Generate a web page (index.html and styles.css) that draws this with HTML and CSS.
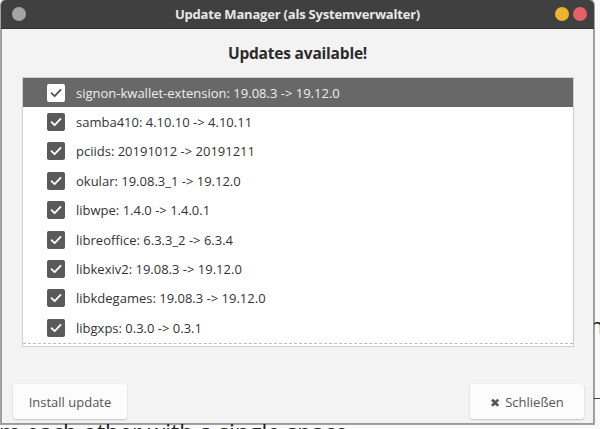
FILE: index.html
```html
<!DOCTYPE html>
<html>
<head>
<meta charset="utf-8">
<link rel="stylesheet" href="styles.css">
</head>
<body>
<div class="desktop">
  <div class="backdrop-right"><span class="bg-n">n</span></div>
  <div class="backdrop-bottom">m each other with a single space</div>
  <div class="window">
    <div class="titlebar">
      <span class="dot dot-gray"></span>
      <span class="title">Update Manager (als Systemverwalter)</span>
      <span class="dots-right">
        <span class="dot dot-yellow"></span>
        <span class="dot dot-red"></span>
      </span>
    </div>
    <div class="content">
      <h1 class="heading">Updates available!</h1>
      <div class="list">
        <div class="row selected"><span class="check"><svg viewBox="0 0 18 18"><path d="M4.5 9.2 L7.6 12.2 L13.6 5.8" /></svg></span><span class="label">signon-kwallet-extension: 19.08.3 -&gt; 19.12.0</span></div>
        <div class="row"><span class="check"><svg viewBox="0 0 18 18"><path d="M4.5 9.2 L7.6 12.2 L13.6 5.8" /></svg></span><span class="label">samba410: 4.10.10 -&gt; 4.10.11</span></div>
        <div class="row"><span class="check"><svg viewBox="0 0 18 18"><path d="M4.5 9.2 L7.6 12.2 L13.6 5.8" /></svg></span><span class="label">pciids: 20191012 -&gt; 20191211</span></div>
        <div class="row"><span class="check"><svg viewBox="0 0 18 18"><path d="M4.5 9.2 L7.6 12.2 L13.6 5.8" /></svg></span><span class="label">okular: 19.08.3_1 -&gt; 19.12.0</span></div>
        <div class="row"><span class="check"><svg viewBox="0 0 18 18"><path d="M4.5 9.2 L7.6 12.2 L13.6 5.8" /></svg></span><span class="label">libwpe: 1.4.0 -&gt; 1.4.0.1</span></div>
        <div class="row"><span class="check"><svg viewBox="0 0 18 18"><path d="M4.5 9.2 L7.6 12.2 L13.6 5.8" /></svg></span><span class="label">libreoffice: 6.3.3_2 -&gt; 6.3.4</span></div>
        <div class="row"><span class="check"><svg viewBox="0 0 18 18"><path d="M4.5 9.2 L7.6 12.2 L13.6 5.8" /></svg></span><span class="label">libkexiv2: 19.08.3 -&gt; 19.12.0</span></div>
        <div class="row"><span class="check"><svg viewBox="0 0 18 18"><path d="M4.5 9.2 L7.6 12.2 L13.6 5.8" /></svg></span><span class="label">libkdegames: 19.08.3 -&gt; 19.12.0</span></div>
        <div class="row"><span class="check"><svg viewBox="0 0 18 18"><path d="M4.5 9.2 L7.6 12.2 L13.6 5.8" /></svg></span><span class="label">libgxps: 0.3.0 -&gt; 0.3.1</span></div>
        <div class="undershoot"></div>
      </div>
      <div class="buttons">
        <button class="btn">Install update</button>
        <button class="btn btn-close"><span class="x">✖</span>Schließen</button>
      </div>
    </div>
  </div>
</div>
</body>
</html>
```

FILE: styles.css
```css
* { box-sizing: border-box; }
html, body { margin: 0; padding: 0; }
body {
  width: 600px;
  height: 429px;
  overflow: hidden;
  background: #ffffff;
  font-family: "Open Sans", "Noto Sans", sans-serif;
}
.desktop {
  position: relative;
  width: 600px;
  height: 429px;
  overflow: hidden;
  background: #fafafa;
}
.backdrop-right {
  position: absolute;
  left: 594px;
  top: 300px;
  width: 20px;
  height: 99px;
  border-bottom: 1px solid #444;
  font-family: "Open Sans", sans-serif;
  font-size: 22px;
  color: #222;
}
.bg-n { display: block; margin-top: 10px; margin-left: -4px; }
.backdrop-bottom {
  position: absolute;
  left: -1px;
  top: 416px;
  font-family: "Open Sans", sans-serif;
  font-size: 23px;
  color: #222;
  white-space: nowrap;
}
.window {
  position: absolute;
  left: 1px;
  top: 0;
  width: 593px;
  height: 424px;
  display: flex;
  flex-direction: column;
  border-radius: 5px 5px 0 0;
  overflow: hidden;
  box-shadow: 0 0 0 1px rgba(0,0,0,0.35);
}
.titlebar {
  height: 29px;
  background: #404040;
  display: flex;
  align-items: center;
  padding: 0 7px 0 11px;
  border-bottom: 1px solid #2e2e2e;
}
.dot {
  width: 14px;
  height: 14px;
  border-radius: 50%;
  display: inline-block;
}
.dot-gray { background: #a4a4a4; }
.dot-yellow { background: #ecb42f; }
.dot-red { background: #e85f66; }
.dots-right { display: flex; gap: 4px; }
.title {
  flex: 1;
  text-align: center;
  color: #e8e8e8;
  font-weight: bold;
  font-size: 13px;
  letter-spacing: -0.2px;
  padding-left: 14px;
}
.content {
  flex: 1;
  background: #f3f3f3;
  border: 1px solid #9a9a9a;
  border-top: none;
  display: flex;
  flex-direction: column;
  padding: 0 19px 0 10px;
}
.heading {
  margin: 15px 0 0 0;
  text-align: center;
  font-size: 15.5px;
  font-weight: bold;
  color: #2b2b2b;
  height: 19px;
  line-height: 19px;
  padding-left: 9px;
  letter-spacing: -0.2px;
}
.list {
  margin: 14px 0 0 10px;
  height: 270px;
  background: #ffffff;
  border: 1px solid #cfcfcf;
  display: flex;
  flex-direction: column;
  position: relative;
  overflow: hidden;
}
.row {
  height: 29.4px;
  flex: none;
  display: flex;
  align-items: center;
  padding-left: 24px;
  color: #333333;
  font-size: 13px;
}
.row.selected {
  background: #686868;
  color: #eeeeee;
}
.check {
  width: 18px;
  height: 18px;
  border-radius: 2px;
  background: #5a5a5a;
  display: inline-flex;
  margin-right: 11px;
  flex: none;
}
.check svg { width: 18px; height: 18px; }
.check path {
  fill: none;
  stroke: #ffffff;
  stroke-width: 1.8;
  stroke-linecap: round;
  stroke-linejoin: round;
}
.selected .check { background: #ffffff; }
.selected .check path { stroke: #555555; }
.undershoot {
  position: absolute;
  left: 0;
  right: 0;
  bottom: 2px;
  border-bottom: 1px dashed #bdbdbd;
}
.buttons {
  margin-top: auto;
  margin-bottom: 4px;
  display: flex;
  justify-content: space-between;
  margin-left: 1px;
  margin-right: -10px;
}
.btn {
  width: 114px;
  height: 35px;
  border: none;
  border-radius: 3px;
  background: #fcfcfc;
  box-shadow: 0 1px 2px rgba(0,0,0,0.2);
  font-family: "Open Sans", "Noto Sans", sans-serif;
  font-size: 13px;
  color: #555555;
  padding: 0;
}
.btn-close .x { font-size: 12px; margin-right: 5px; color: #555; }
```
